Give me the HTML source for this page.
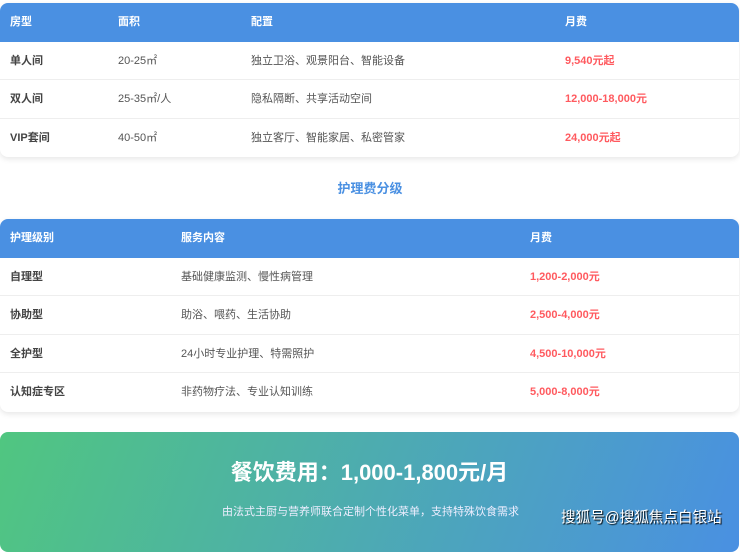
<!DOCTYPE html>
<html><head><meta charset="utf-8"><style>
body{margin:0;background:#fff;width:740px;height:533px;overflow:hidden;font-family:"Liberation Sans","Noto Sans CJK SC",sans-serif;font-size:11px;color:#555}
.t{position:absolute;left:0;width:739px;border-radius:8px;overflow:hidden;box-shadow:0 2px 6px rgba(0,0,0,.1);background:#fff}
.r{position:relative;height:38.5px;border-bottom:1px solid #eee;box-sizing:border-box}
.r:last-child{border-bottom:none}
.h{background:#4a90e2;color:#fff;font-weight:bold;border:none}
.r span{position:absolute;top:0;line-height:38px}
.b{font-weight:bold;color:#444}
.p{color:#ff5a5f;font-weight:bold}
</style></head><body>
<div class="t" style="top:3px">
<div class="r h"><span style="left:10px">房型</span><span style="left:118px">面积</span><span style="left:251px">配置</span><span style="left:565px">月费</span></div>
<div class="r"><span class="b" style="left:10px">单人间</span><span style="left:118px">20-25㎡</span><span style="left:251px">独立卫浴、观景阳台、智能设备</span><span class="p" style="left:565px">9,540元起</span></div>
<div class="r"><span class="b" style="left:10px">双人间</span><span style="left:118px">25-35㎡/人</span><span style="left:251px">隐私隔断、共享活动空间</span><span class="p" style="left:565px">12,000-18,000元</span></div>
<div class="r"><span class="b" style="left:10px">VIP套间</span><span style="left:118px">40-50㎡</span><span style="left:251px">独立客厅、智能家居、私密管家</span><span class="p" style="left:565px">24,000元起</span></div>
</div>
<div style="position:absolute;top:178px;left:0;width:740px;text-align:center;color:#4a90e2;font-weight:bold;font-size:13px">护理费分级</div>
<div class="t" style="top:219px">
<div class="r h"><span style="left:10px">护理级别</span><span style="left:181px">服务内容</span><span style="left:530px">月费</span></div>
<div class="r"><span class="b" style="left:10px">自理型</span><span style="left:181px">基础健康监测、慢性病管理</span><span class="p" style="left:530px">1,200-2,000元</span></div>
<div class="r"><span class="b" style="left:10px">协助型</span><span style="left:181px">助浴、喂药、生活协助</span><span class="p" style="left:530px">2,500-4,000元</span></div>
<div class="r"><span class="b" style="left:10px">全护型</span><span style="left:181px">24小时专业护理、特需照护</span><span class="p" style="left:530px">4,500-10,000元</span></div>
<div class="r"><span class="b" style="left:10px">认知症专区</span><span style="left:181px">非药物疗法、专业认知训练</span><span class="p" style="left:530px">5,000-8,000元</span></div>
</div>
<div style="position:absolute;top:432px;left:0;width:739px;height:120px;border-radius:8px;background:linear-gradient(110deg,#50c680,#4a90e2)">
<div style="position:absolute;top:23px;left:0;width:739px;text-align:center;color:#fff;font-weight:bold;font-size:22px">餐饮费用：1,000-1,800元/月</div>
<div style="position:absolute;top:71px;left:222px;color:#eef;font-size:11px">由法式主厨与营养师联合定制个性化菜单，支持特殊饮食需求</div>
<div style="position:absolute;top:74px;left:561px;color:#fff;font-size:14.6px;text-shadow:1px 1px 1px #000">搜狐号@搜狐焦点白银站</div>
</div>
</body></html>
